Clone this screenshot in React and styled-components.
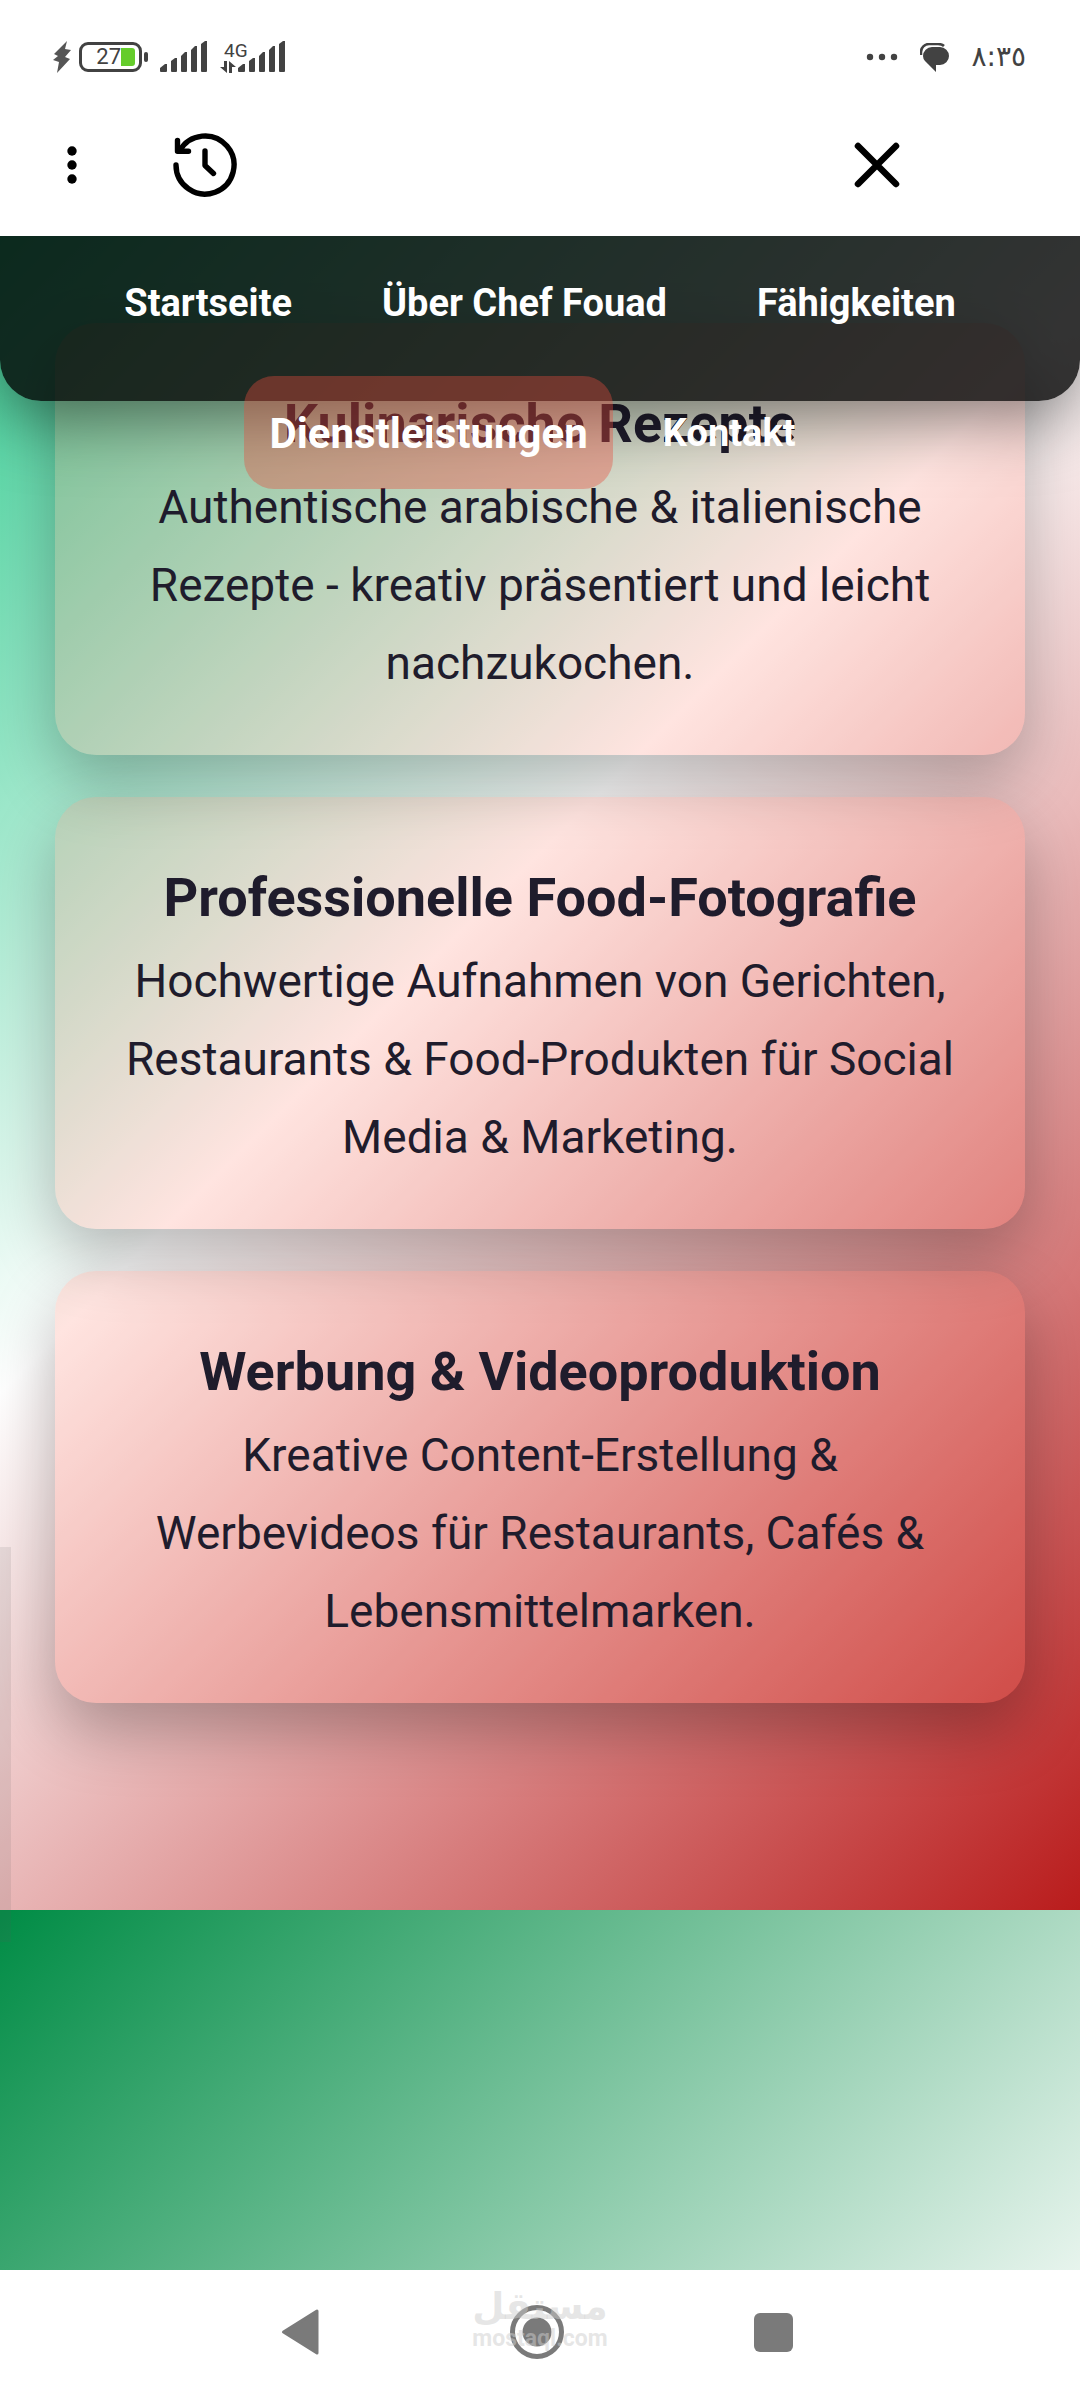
import React from "react";
import styled, { createGlobalStyle, css } from "styled-components";

const TEXT_DARK = "#1f1c2c";
const ICON_GREY = "#424242";
const NAV_GREY = "#7a7a7a";

const GlobalStyle = createGlobalStyle`
  * {
    box-sizing: border-box;
  }
  body {
    margin: 0;
    background: #fff;
    font-family: Roboto, "Open Sans", sans-serif;
    color: ${TEXT_DARK};
  }
  h3, p, ul {
    margin: 0;
    padding: 0;
  }
`;

const Shell = styled.div`
  min-height: 100vh;
  display: flex;
  flex-direction: column;
  overflow: hidden;
`;

/* phone status bar */

const StatusBar = styled.div`
  display: flex;
  align-items: center;
  justify-content: space-between;
  height: 94px;
  padding: 20px 54px 0 53px;
  color: ${ICON_GREY};
`;

const StatusGroup = styled.div`
  display: flex;
  align-items: center;
  gap: ${({ $gap }) => $gap}px;

  svg {
    display: block;
  }
`;

const Battery = styled.div`
  display: flex;
  align-items: center;
  gap: 2px;

  &::after {
    content: "";
    width: 4px;
    height: 10px;
    border-radius: 2px;
    background: ${ICON_GREY};
  }
`;

const BatteryBody = styled.div`
  display: flex;
  align-items: center;
  justify-content: flex-end;
  width: 63px;
  height: 30px;
  padding-right: 4px;
  border: 3px solid ${ICON_GREY};
  border-radius: 9px;
  font-size: 22px;
  line-height: 24px;
`;

const BatteryCharge = styled.span`
  width: 14px;
  height: 18px;
  border-radius: 0 3px 3px 0;
  background: #65cc2b;
`;

/* the label reaches over the short first bars of the signal */
const Network = styled.div`
  display: flex;
  flex-direction: column;
  width: 28px;
  margin-right: -10px;
  font-size: 19px;
  line-height: 20px;
`;

const NetworkLabel = styled.span`
  padding-left: 4px;
`;

const Time = styled.span`
  font-family: "DejaVu Sans", sans-serif;
  font-size: 28px;
  line-height: 32px;
`;

/* browser toolbar */

const Toolbar = styled.div`
  display: flex;
  align-items: center;
  gap: 69px;
  height: 142px;
  padding: 0 171px 0 40px;
`;

const IconButton = styled.button`
  display: flex;
  align-items: center;
  justify-content: center;
  width: 64px;
  height: 64px;
  padding: 0;
  border: 0;
  background: none;
  color: ${({ $color }) => $color || "#000"};
  ${({ $end }) => $end && css`
    margin-left: auto;
  `}
`;

/* web page */

const Page = styled.div`
  position: relative;
  flex: 1;
  display: flex;
  flex-direction: column;
  overflow: hidden;
`;

const Header = styled.header`
  position: absolute;
  top: 0;
  left: 0;
  right: 0;
  z-index: 2;
  height: 165px;
  padding-top: 15px;
  border-radius: 0 0 41px 41px;
  background: rgba(0, 0, 0, 0.8);
  box-shadow: 0 14px 69px rgba(0, 0, 0, 0.5);
`;

const NavList = styled.ul`
  display: flex;
  flex-wrap: wrap;
  justify-content: center;
  align-items: center;
  gap: 26px 44px;
  padding: 0 80px;
  list-style: none;
`;

const NavLink = styled.a`
  display: block;
  padding: 28px 23px;
  border-radius: 30px;
  font-size: 38px;
  line-height: 48px;
  font-weight: 700;
  color: #fff;
  text-decoration: none;
  ${({ $active }) => $active && css`
    /* grows in place, the neighbours keep their spot */
    margin: -6px -17px -4px;
    padding: 31px 25px 29px;
    font-size: 42px;
    line-height: 53px;
    background: rgba(231, 76, 60, 0.38);
  `}
`;

const Services = styled.main`
  display: flex;
  flex-direction: column;
  gap: 42px;
  padding: 87px 55px 207px;
  background: linear-gradient(135deg, #3acf95 0%, #fff 42%, #b91c1c 100%);
`;

const Card = styled.article`
  padding: 57px 55px 53px;
  border-radius: 41px;
  text-align: center;
  background: rgba(255, 120, 100, 0.2);
  box-shadow: 0 27px 64px rgba(0, 0, 0, 0.28);
`;

const CardTitle = styled.h3`
  font-size: 54px;
  line-height: 88px;
  font-weight: 700;
`;

const CardText = styled.p`
  font-size: 46px;
  line-height: 78px;
`;

const PageEnd = styled.footer`
  flex: 1;
  min-height: 120px;
  background: linear-gradient(135deg, #008c45, #e7f4ed);
`;

const ScrollThumb = styled.div`
  position: absolute;
  left: 0;
  bottom: 328px;
  width: 11px;
  height: 395px;
  background: rgba(90, 90, 90, 0.12);
`;

/* system navigation */

const SystemNav = styled.nav`
  position: relative;
  display: flex;
  align-items: center;
  justify-content: center;
  gap: 173px;
  height: 130px;
  padding: 0 7px 6px 0;
`;

const Watermark = styled.div`
  position: absolute;
  inset: 16px 0 auto;
  text-align: center;
  color: rgba(205, 205, 205, 0.5);
  font-weight: 700;
  pointer-events: none;
`;

const WatermarkName = styled.div`
  font-family: "DejaVu Sans", sans-serif;
  font-size: 37px;
  line-height: 42px;
`;

const WatermarkSite = styled.div`
  font-size: 23px;
  line-height: 22px;
`;

const links = [
  { label: "Startseite" },
  { label: "Über Chef Fouad" },
  { label: "Fähigkeiten" },
  { label: "Dienstleistungen", active: true },
  { label: "Kontakt" },
];

const services = [
  {
    title: "Kulinarische Rezepte",
    text: "Authentische arabische & italienische Rezepte - kreativ präsentiert und leicht nachzukochen.",
  },
  {
    title: "Professionelle Food-Fotografie",
    text: "Hochwertige Aufnahmen von Gerichten, Restaurants & Food-Produkten für Social Media & Marketing.",
  },
  {
    title: "Werbung & Videoproduktion",
    text: "Kreative Content-Erstellung & Werbevideos für Restaurants, Cafés & Lebensmittelmarken.",
  },
];

const BoltIcon = () => (
  <svg width="18" height="32" viewBox="0 0 18 32" fill="#555">
    <path d="M14 0 1 13l4 2-5 4 6 2-2 11 13-14-5-2 6-7-6-1z" />
  </svg>
);

const SignalIcon = () => (
  <svg width="48" height="32" viewBox="0 0 48 32" fill={ICON_GREY}>
    <path d="M0 30v-3l5-4h2v7a1 1 0 0 1-1 1H1a1 1 0 0 1-1-1z" />
    <path d="M11 30V20l4-3h2v13a1 1 0 0 1-1 1h-4a1 1 0 0 1-1-1z" />
    <path d="M21 30V15l4-4h2v19a1 1 0 0 1-1 1h-4a1 1 0 0 1-1-1z" />
    <path d="M31 30V9l4-4h2v25a1 1 0 0 1-1 1h-4a1 1 0 0 1-1-1z" />
    <path d="M41 30V3l4-3h2v30a1 1 0 0 1-1 1h-4a1 1 0 0 1-1-1z" />
  </svg>
);

const DataIcon = () => (
  <svg width="16" height="12" viewBox="0 0 16 12" fill={ICON_GREY}>
    <path d="M4 0h3v12L0 6h4zM12 12H9V0l7 6h-4z" />
  </svg>
);

const MoreIcon = () => (
  <svg width="32" height="8" viewBox="0 0 32 8" fill={ICON_GREY}>
    <circle cx="4" cy="4" r="3.2" />
    <circle cx="16" cy="4" r="3.2" />
    <circle cx="28" cy="4" r="3.2" />
  </svg>
);

const ChatIcon = () => (
  <svg width="29" height="29" viewBox="0 0 29 29" fill={ICON_GREY}>
    <path d="M12 4h8a9 9 0 0 1 0 18h-4v7L5 18A9 8 0 0 1 3 13a9 9 0 0 1 9-9z" />
    <path d="M1 12V9a8 8 0 0 1 8-8h9q4 0 6 2" fill="none" stroke={ICON_GREY} strokeWidth="2.5" />
  </svg>
);

const DotsIcon = () => (
  <svg width="12" height="40" viewBox="0 0 12 40">
    <circle cx="6" cy="6" r="4.7" />
    <circle cx="6" cy="20" r="4.7" />
    <circle cx="6" cy="34" r="4.7" />
  </svg>
);

const HistoryIcon = () => (
  <svg
    width="64"
    height="64"
    viewBox="0 0 64 64"
    fill="none"
    stroke="currentColor"
    strokeWidth="5.4"
    strokeLinecap="round"
    strokeLinejoin="round"
  >
    <path d="M3 32A29 29 0 1 0 6.600 18" />
    <path d="M4.500 7.500V18.300H15.500" />
    <path d="M32 18V32.500L40.500 40.500" />
  </svg>
);

const CloseIcon = () => (
  <svg width="48" height="48" viewBox="0 0 48 48" stroke="currentColor" strokeWidth="6.500" strokeLinecap="round">
    <path d="M5 5 43 43M43 5 5 43" />
  </svg>
);

const BackIcon = () => (
  <svg width="38" height="48" viewBox="0 0 38 48" fill="currentColor" stroke="currentColor" strokeWidth="3" strokeLinejoin="round">
    <path d="M36 3v42L2.500 24z" />
  </svg>
);

const HomeIcon = () => (
  <svg width="54" height="54" viewBox="0 0 54 54">
    <circle cx="27" cy="27" r="24.500" fill="none" stroke="currentColor" strokeWidth="5" />
    <circle cx="27" cy="27" r="14.500" fill="currentColor" />
  </svg>
);

const RecentsIcon = () => (
  <svg width="39" height="39" viewBox="0 0 39 39">
    <rect width="39" height="39" rx="6" fill="currentColor" />
  </svg>
);

const App = () => {
  return (
    <Shell>
      <GlobalStyle />
      <StatusBar>
        <StatusGroup $gap={12}>
          <StatusGroup $gap={8}>
            <BoltIcon />
            <Battery>
              <BatteryBody>
                27
                <BatteryCharge />
              </BatteryBody>
            </Battery>
          </StatusGroup>
          <SignalIcon />
          <StatusGroup $gap={0}>
            <Network>
              <NetworkLabel>4G</NetworkLabel>
              <DataIcon />
            </Network>
            <SignalIcon />
          </StatusGroup>
        </StatusGroup>
        <StatusGroup $gap={22}>
          <MoreIcon />
          <ChatIcon />
          <Time>٨:٣٥</Time>
        </StatusGroup>
      </StatusBar>

      <Toolbar>
        <IconButton aria-label="Menü">
          <DotsIcon />
        </IconButton>
        <IconButton aria-label="Verlauf">
          <HistoryIcon />
        </IconButton>
        <IconButton aria-label="Schließen" $end>
          <CloseIcon />
        </IconButton>
      </Toolbar>

      <Page>
        <Header>
          <nav>
            <NavList>
              {links.map(({ label, active }) => (
                <li key={label}>
                  <NavLink href="#" $active={active}>{label}</NavLink>
                </li>
              ))}
            </NavList>
          </nav>
        </Header>
        <Services>
          {services.map(({ title, text }) => (
            <Card key={title}>
              <CardTitle>{title}</CardTitle>
              <CardText>{text}</CardText>
            </Card>
          ))}
        </Services>
        <PageEnd />
        <ScrollThumb />
      </Page>

      <SystemNav>
        <IconButton aria-label="Zurück" $color={NAV_GREY}>
          <BackIcon />
        </IconButton>
        <IconButton aria-label="Startbildschirm" $color={NAV_GREY}>
          <HomeIcon />
        </IconButton>
        <IconButton aria-label="Letzte Apps" $color={NAV_GREY}>
          <RecentsIcon />
        </IconButton>
        <Watermark>
          <WatermarkName lang="ar">مستقل</WatermarkName>
          <WatermarkSite>mostaql.com</WatermarkSite>
        </Watermark>
      </SystemNav>
    </Shell>
  );
};

export default App;
